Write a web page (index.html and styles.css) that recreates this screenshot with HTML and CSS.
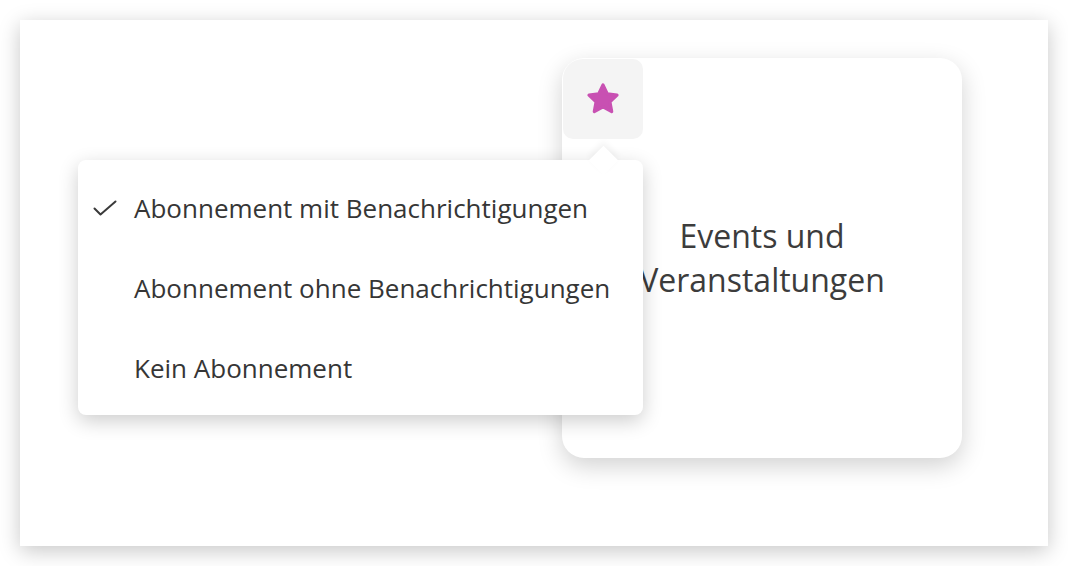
FILE: index.html
```html
<!DOCTYPE html>
<html lang="de">
  <head>
    <meta charset="UTF-8" />
    <meta name="viewport" content="width=device-width, initial-scale=1.0" />
    <title>Abonnement</title>
    <link rel="stylesheet" href="styles.css">
  </head>
  <body>
    <div class="stage">
      <!-- Topic card -->
      <div class="card">
        <button class="star-btn" title="Abonnement">
          <svg width="36" height="34" viewBox="0 0 36 34">
            <path d="M18 3 L22.3 11.9 L32 13.2 L24.9 19.9 L26.7 29.6 L18 24.9 L9.3 29.6 L11.1 19.9 L4 13.2 L13.7 11.9 Z"
              fill="#c850b2" stroke="#c850b2" stroke-width="3.2" stroke-linejoin="round" />
          </svg>
        </button>
        <div class="card-title">Events und<br>Veranstaltungen</div>

        <!-- Subscription menu -->
        <ul class="menu">
          <li class="selected">
            <span class="check">
              <svg width="24" height="16" viewBox="0 0 24 16">
                <path d="M1.5 8.5 L7.5 14.5 L22.5 1.5" fill="none" stroke="#3a3a3a" stroke-width="2" stroke-linecap="round" stroke-linejoin="round" />
              </svg>
            </span>
            Abonnement mit Benachrichtigungen
          </li>
          <li><span class="check"></span>Abonnement ohne Benachrichtigungen</li>
          <li><span class="check"></span>Kein Abonnement</li>
        </ul>
      </div>
    </div>
  </body>
</html>
```

FILE: styles.css
```css
body {
  margin: 0;
  background: #ffffff;
  font-family: "Open Sans", "Liberation Sans", sans-serif;
  color: #3a3a3a;
}

.stage {
  margin: 20px;
  height: 526px;
  box-sizing: border-box;
  padding: 38px 0 0 542px;
  background: #ffffff;
  box-shadow: 0 5px 20px rgba(0, 0, 0, 0.22);
}

.card {
  position: relative;
  width: 400px;
  height: 400px;
  box-sizing: border-box;
  padding: 1px;
  background: #ffffff;
  border-radius: 22px;
  box-shadow: 0 8px 24px rgba(0, 0, 0, 0.18);
  display: flex;
  flex-direction: column;
}

.star-btn {
  width: 80px;
  height: 80px;
  border: none;
  padding: 0;
  background: #f4f4f4;
  border-radius: 20px 10px 10px 10px;
  display: flex;
  align-items: center;
  justify-content: center;
  cursor: pointer;
}

.card-title {
  flex: 1;
  display: flex;
  align-items: center;
  justify-content: center;
  text-align: center;
  font-size: 32px;
  line-height: 44px;
  margin-top: -80px;
  color: #3c3c3c;
}

.menu {
  position: absolute;
  left: -484px;
  top: 102px;
  width: 565px;
  box-sizing: border-box;
  margin: 0;
  padding: 8px 0 7px;
  list-style: none;
  background: #ffffff;
  border-radius: 8px;
  box-shadow: 0 6px 20px rgba(0, 0, 0, 0.2);
}

.menu::before {
  content: "";
  position: absolute;
  top: -10px;
  left: 515px;
  width: 21px;
  height: 21px;
  background: #ffffff;
  transform: rotate(45deg);
  box-shadow: -3px -3px 6px rgba(0, 0, 0, 0.05);
}

.menu li {
  position: relative;
  display: flex;
  align-items: center;
  height: 80px;
  font-size: 26px;
  color: #363636;
  cursor: pointer;
  white-space: nowrap;
}

.check {
  width: 56px;
  padding-left: 15px;
  box-sizing: border-box;
  display: flex;
  align-items: center;
  margin-top: 0;
}
```
